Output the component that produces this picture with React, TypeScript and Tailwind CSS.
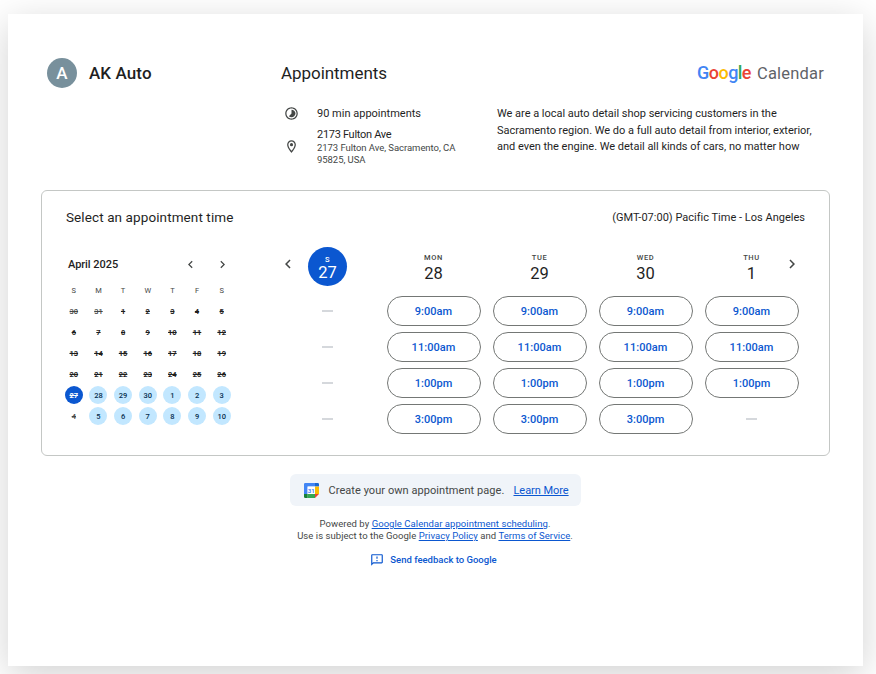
import { MdChevronLeft, MdChevronRight, MdOutlineFeedback, MdOutlineLocationOn, MdTimelapse } from 'react-icons/md';

const weekdays = ['S', 'M', 'T', 'W', 'T', 'F', 'S'];
const days = [
  30, 31, 1, 2, 3, 4, 5,
  6, 7, 8, 9, 10, 11, 12,
  13, 14, 15, 16, 17, 18, 19,
  20, 21, 22, 23, 24, 25, 26,
  27, 28, 29, 30, 1, 2, 3,
  4, 5, 6, 7, 8, 9, 10,
];

function dayStyle(i: number) {
  if (i === 28) return 'bg-[#0b57d0] text-white line-through font-bold';
  if (i > 28 && i !== 35) return 'bg-[#c2e7ff] text-[#062e4f] font-medium';
  if (i < 2 || i === 35) return 'text-[#444746] line-through font-medium';
  return 'text-[#1f1f1f] line-through font-bold';
}

const columns = [
  { name: 'S', date: 27, slots: [null, null, null, null], selected: true },
  { name: 'MON', date: 28, slots: ['9:00am', '11:00am', '1:00pm', '3:00pm'] },
  { name: 'TUE', date: 29, slots: ['9:00am', '11:00am', '1:00pm', '3:00pm'] },
  { name: 'WED', date: 30, slots: ['9:00am', '11:00am', '1:00pm', '3:00pm'] },
  { name: 'THU', date: 1, slots: ['9:00am', '11:00am', '1:00pm', null] },
];

function CalendarLogo() {
  return (
    <svg width="15" height="15" viewBox="0 0 15 15" className="mt-px">
      <path d="M1.2 0H11v3.6H3.6V11H0V1.2Q0 0 1.2 0Z" fill="#4285f4" />
      <path d="M11 0h2.8Q15 0 15 1.2V3.6H11Z" fill="#1967d2" />
      <path d="M11 3.6h4V11H11Z" fill="#fbbc04" />
      <path d="M3.6 11H11v4H3.6Z" fill="#34a853" />
      <path d="M0 11h3.6v4H1.2Q0 15 0 13.8Z" fill="#188038" />
      <path d="M11 11h4l-4 4Z" fill="#ea4335" />
      <path d="M3.6 3.6H11V11H3.6Z" fill="#fff" />
      <text x="7.2" y="9.5" textAnchor="middle" fontSize="6" fontWeight="700" fill="#4285f4">31</text>
    </svg>
  );
}

function Header() {
  return (
    <header className="flex h-[132px]">
      <div className="flex h-[30px] w-[234px] items-center">
        <div className="flex size-[30px] items-center justify-center rounded-full bg-[#78909c] pt-px text-[17px] font-medium text-white">A</div>
        <h1 className="ml-3 pt-[2px] text-[17px] font-medium tracking-[0.1px]">AK Auto</h1>
      </div>
      <div className="w-[543px]">
        <div className="flex h-[30px] items-center justify-between">
          <h2 className="pt-[2px] text-[17px] tracking-[-0.05px]">Appointments</h2>
          <div className="flex items-baseline text-[18px] leading-[28px]">
            <span className="font-medium tracking-[-0.55px]">
              <span className="text-[#4285f4]">G</span>
              <span className="text-[#ea4335]">o</span>
              <span className="text-[#fbbc04]">o</span>
              <span className="text-[#4285f4]">g</span>
              <span className="text-[#34a853]">l</span>
              <span className="text-[#ea4335]">e</span>
            </span>
            <span className="ml-[6px] text-[16.5px] tracking-[0.2px] text-[#5f6368]">Calendar</span>
          </div>
        </div>
        <div className="mt-[18px] flex text-[11px]">
          <div className="w-[216px]">
            <div className="flex h-[17px] items-center">
              <MdTimelapse className="mb-[2px] ml-[3px] mr-[18px] size-[15px] text-[#444746]" />
              <span>90 min appointments</span>
            </div>
            <div className="mt-[3px] flex items-center">
              <MdOutlineLocationOn className="ml-[3px] mr-[18px] size-[15px] text-[#444746]" />
              <div>
                <div className="leading-[17px] tracking-[-0.3px]">2173 Fulton Ave</div>
                <div className="-mt-px text-[9.5px] leading-[12px] tracking-[-0.05px] text-[#444746]">2173 Fulton Ave, Sacramento, CA<br />95825, USA</div>
              </div>
            </div>
          </div>
          <p className="whitespace-nowrap leading-[16.5px] tracking-[-0.02px]">
            We are a local auto detail shop servicing customers in the<br />
            Sacramento region. We do a full auto detail from interior, exterior,<br />
            and even the engine. We detail all kinds of cars, no matter how
          </p>
        </div>
      </div>
    </header>
  );
}

function MiniCalendar() {
  return (
    <div className="ml-[19.5px] mt-[17px] w-[172.5px]">
      <div className="flex h-[20px] items-center">
        <span className="ml-[6.5px] w-[115px] pt-[2px] text-[11px] font-medium tracking-[-0.05px]">April 2025</span>
        <MdChevronLeft className="size-[15px] text-[#444746]" />
        <MdChevronRight className="ml-[17px] size-[15px] text-[#444746]" />
      </div>
      <div className="mt-[6px] grid h-[20px] grid-cols-7 text-center text-[7.5px] leading-[21px] text-[#444746]">
        {weekdays.map((d, i) => <span key={i}>{d}</span>)}
      </div>
      <div className="grid grid-cols-7 justify-items-center">
        {days.map((d, i) => (
          <div key={i} className="flex h-[21px] items-center">
            <span className={`size-[18px] rounded-full text-center text-[7.5px] leading-[19px] ${dayStyle(i)}`}>{d}</span>
          </div>
        ))}
      </div>
    </div>
  );
}

function Schedule() {
  return (
    <div className="ml-[45px] mt-[10px] flex">
      <MdChevronLeft className="mt-[8px] size-[18px] text-[#444746]" />
      <div className="-ml-[22.5px] -mr-[21.5px] grid grid-cols-5">
        {columns.map((c) => (
          <div key={c.name} className="flex w-[106px] flex-col items-center">
            <div className={`flex size-[39px] flex-col items-center rounded-full ${c.selected ? 'bg-[#0b57d0] pt-[8px] text-white' : 'pt-[6px]'}`}>
              <span className={`text-[7.5px] font-medium leading-[9px] tracking-[0.6px] ${c.selected ? '' : 'text-[#444746]'}`}>{c.name}</span>
              <span className={`text-[16.5px] leading-[18px] ${c.selected ? '' : 'mt-[3px]'}`}>{c.date}</span>
            </div>
            <div className="mt-[10px] flex flex-col gap-[6px]">
              {c.slots.map((s, i) => s ? (
                <button key={i} className="h-[30px] w-[94px] rounded-full border border-[#747775] pt-[2px] text-[11px] font-medium tracking-[0.05px] text-[#0b57d0]">{s}</button>
              ) : (
                <div key={i} className="flex h-[30px] w-[94px] items-center justify-center"><span className="h-[2px] w-[11px] bg-[#d5d8dc]" /></div>
              ))}
            </div>
          </div>
        ))}
      </div>
      <MdChevronRight className="mt-[8px] size-[18px] text-[#444746]" />
    </div>
  );
}

export default function App() {
  return (
    <div className="h-[674px] w-[876px] overflow-hidden bg-white pl-2 pt-[14px] font-[Roboto,sans-serif] text-[#1f1f1f]">
      <div className="h-[652px] w-[855px] bg-white pt-11 shadow-[0_9px_36px_rgba(0,0,0,0.18)]">
        <div className="pl-[39px]"><Header /></div>
        <main className="ml-[33px] h-[266px] w-[789px] rounded-[6px] border border-[#c4c7c5]">
          <div className="flex h-[46px] items-center justify-between pl-6 pr-6 pt-[6px]">
            <h3 className="text-[13.5px] tracking-[0.1px]">Select an appointment time</h3>
            <span className="pt-[2px] text-[11px] tracking-[0.01px]">(GMT-07:00) Pacific Time - Los Angeles</span>
          </div>
          <div className="flex">
            <MiniCalendar />
            <Schedule />
          </div>
        </main>
        <footer className="flex flex-col items-center pr-[1px] text-[#444746]">
          <div className="mt-[18px] flex h-8 w-[291px] items-center rounded-[6px] bg-[#f0f4f9] pl-[14px] text-[11px]">
            <CalendarLogo />
            <span className="ml-[10px] w-[185px] pt-[2px] tracking-[0.06px]">Create your own appointment page.</span>
            <a href="#" className="pt-[2px] tracking-[-0.05px] text-[#0b57d0] underline">Learn More</a>
          </div>
          <p className="mt-3 text-center text-[9.5px] leading-[12px] tracking-[0.05px]">
            Powered by <a href="#" className="text-[#0b57d0] underline">Google Calendar appointment scheduling</a>.<br />
            Use is subject to the Google <a href="#" className="text-[#0b57d0] underline">Privacy Policy</a> and <a href="#" className="text-[#0b57d0] underline">Terms of Service</a>.
          </p>
          <div className="mr-[3px] mt-[9px] flex h-[18px] items-center text-[9.5px] font-medium text-[#0b57d0]">
            <MdOutlineFeedback className="mr-[6px] size-[14px]" />
            Send feedback to Google
          </div>
        </footer>
      </div>
    </div>
  );
}
